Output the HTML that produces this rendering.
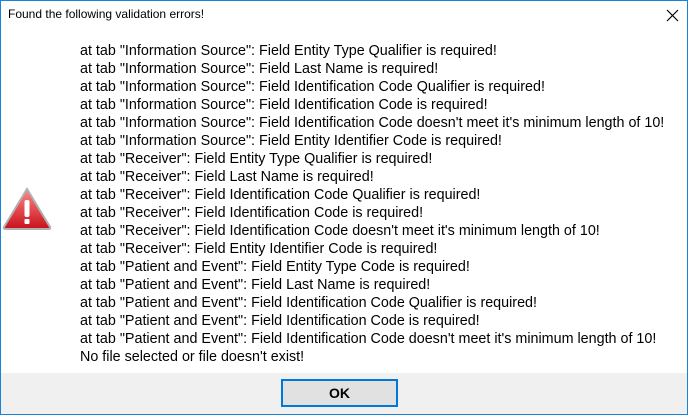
<!DOCTYPE html>
<html><head><style>
html,body{margin:0;padding:0}
body{width:688px;height:415px;position:relative;background:#fff;overflow:hidden;font-family:"Liberation Sans",Arial,sans-serif}
.frame{position:absolute;left:0;top:0;width:686px;height:413px;border:1px solid #1883d7}
.title{position:absolute;left:8px;top:7px;font-size:12px;color:#000}
.x{position:absolute;left:666px;top:9px}
.msg{position:absolute;left:80px;top:42px;font-size:14.33px;line-height:18px;color:#000;white-space:pre}
.foot{position:absolute;left:1px;top:373px;width:686px;height:41px;background:#f0f0f0}
.btn{position:absolute;left:281px;top:379px;width:113px;height:24px;border:2px solid #0078d7;background:#e1e1e1;font-weight:bold;font-size:14px;text-align:center;line-height:25px}
.icon{position:absolute;left:2px;top:187px}
</style></head><body>
<div class="frame"></div>
<div class="title">Found the following validation errors!</div>
<svg class="x" width="13" height="13"><path d="M1 1L12 12M12 1L1 12" stroke="#000" stroke-width="1.2"/></svg>
<svg class="icon" width="50" height="44" viewBox="0 0 50 44">
<defs><linearGradient id="g" x1="0" y1="0" x2="0" y2="1"><stop offset="0" stop-color="#f88"/><stop offset="1" stop-color="#c8101a"/></linearGradient></defs>
<path d="M25 2 L48 40 Q49 42 46 42 L4 42 Q1 42 2 40 Z" fill="url(#g)" stroke="#b0b0b0" stroke-width="2"/>
<rect x="22.5" y="13" width="5" height="17" rx="2" fill="#fff"/>
<rect x="22.5" y="32" width="5" height="5" rx="1" fill="#fff"/>
</svg>
<div class="msg">at tab "Information Source": Field Entity Type Qualifier is required!
at tab "Information Source": Field Last Name is required!
at tab "Information Source": Field Identification Code Qualifier is required!
at tab "Information Source": Field Identification Code is required!
at tab "Information Source": Field Identification Code doesn't meet it's minimum length of 10!
at tab "Information Source": Field Entity Identifier Code is required!
at tab "Receiver": Field Entity Type Qualifier is required!
at tab "Receiver": Field Last Name is required!
at tab "Receiver": Field Identification Code Qualifier is required!
at tab "Receiver": Field Identification Code is required!
at tab "Receiver": Field Identification Code doesn't meet it's minimum length of 10!
at tab "Receiver": Field Entity Identifier Code is required!
at tab "Patient and Event": Field Entity Type Code is required!
at tab "Patient and Event": Field Last Name is required!
at tab "Patient and Event": Field Identification Code Qualifier is required!
at tab "Patient and Event": Field Identification Code is required!
at tab "Patient and Event": Field Identification Code doesn't meet it's minimum length of 10!
No file selected or file doesn't exist!</div>
<div class="foot"></div>
<div class="btn">OK</div>
</body></html>
